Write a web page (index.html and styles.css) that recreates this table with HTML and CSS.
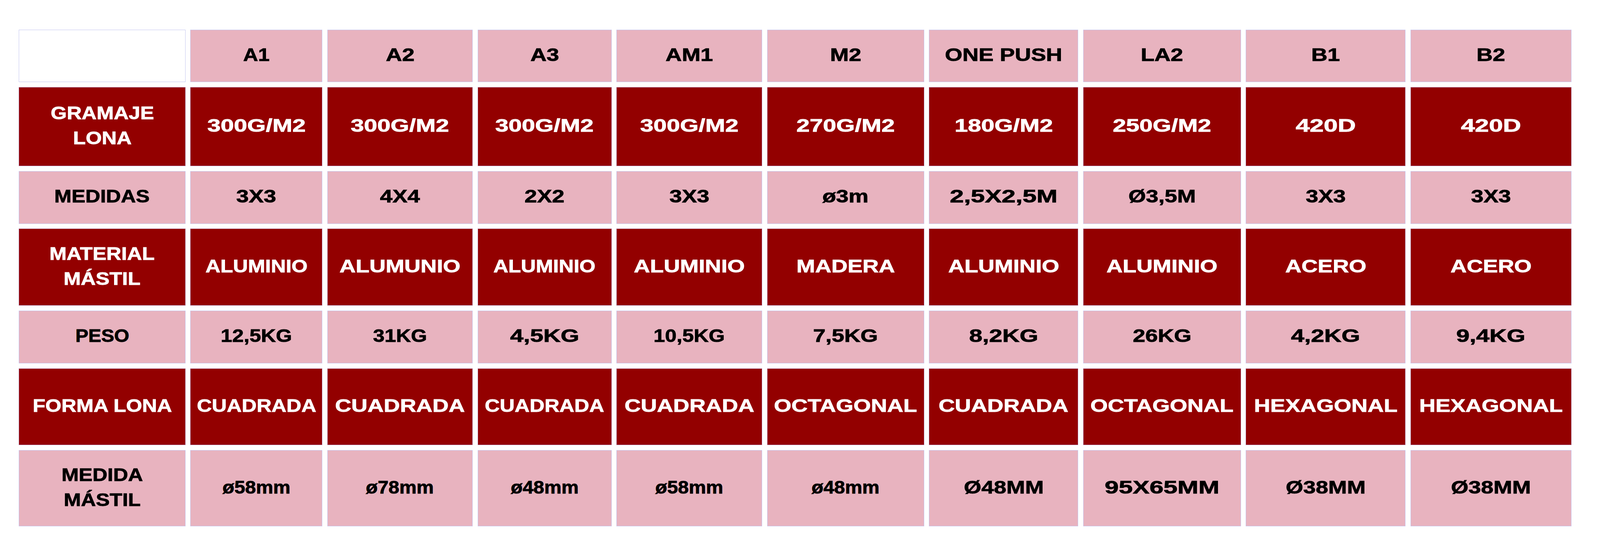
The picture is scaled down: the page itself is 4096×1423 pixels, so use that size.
FILE: index.html
```html
<!DOCTYPE html>
<html lang="es">
<head>
<meta charset="utf-8">
<title>Comparativa de carpas</title>
<link rel="stylesheet" href="styles.css">
</head>
<body>
<div class="specs">
  <div class="cell blank"></div>
  <div class="cell light"><span class="t narrow">A1</span></div>
  <div class="cell light"><span class="t">A2</span></div>
  <div class="cell light"><span class="t">A3</span></div>
  <div class="cell light"><span class="t">AM1</span></div>
  <div class="cell light"><span class="t">M2</span></div>
  <div class="cell light"><span class="t">ONE PUSH</span></div>
  <div class="cell light"><span class="t">LA2</span></div>
  <div class="cell light"><span class="t">B1</span></div>
  <div class="cell light"><span class="t">B2</span></div>

  <div class="cell dark"><span class="t narrow">GRAMAJE<br>LONA</span></div>
  <div class="cell dark"><span class="t wide">300G/M2</span></div>
  <div class="cell dark"><span class="t wide">300G/M2</span></div>
  <div class="cell dark"><span class="t wide">300G/M2</span></div>
  <div class="cell dark"><span class="t wide">300G/M2</span></div>
  <div class="cell dark"><span class="t wide">270G/M2</span></div>
  <div class="cell dark"><span class="t wide">180G/M2</span></div>
  <div class="cell dark"><span class="t wide">250G/M2</span></div>
  <div class="cell dark"><span class="t wider">420D</span></div>
  <div class="cell dark"><span class="t wider">420D</span></div>

  <div class="cell light"><span class="t narrow">MEDIDAS</span></div>
  <div class="cell light"><span class="t">3X3</span></div>
  <div class="cell light"><span class="t">4X4</span></div>
  <div class="cell light"><span class="t">2X2</span></div>
  <div class="cell light"><span class="t">3X3</span></div>
  <div class="cell light"><span class="t">ø3m</span></div>
  <div class="cell light"><span class="t wider">2,5X2,5M</span></div>
  <div class="cell light"><span class="t">Ø3,5M</span></div>
  <div class="cell light"><span class="t">3X3</span></div>
  <div class="cell light"><span class="t">3X3</span></div>

  <div class="cell dark"><span class="t narrow">MATERIAL<br>MÁSTIL</span></div>
  <div class="cell dark"><span class="t narrow">ALUMINIO</span></div>
  <div class="cell dark"><span class="t">ALUMUNIO</span></div>
  <div class="cell dark"><span class="t narrow">ALUMINIO</span></div>
  <div class="cell dark"><span class="t">ALUMINIO</span></div>
  <div class="cell dark"><span class="t">MADERA</span></div>
  <div class="cell dark"><span class="t">ALUMINIO</span></div>
  <div class="cell dark"><span class="t">ALUMINIO</span></div>
  <div class="cell dark"><span class="t">ACERO</span></div>
  <div class="cell dark"><span class="t">ACERO</span></div>

  <div class="cell light"><span class="t condensed">PESO</span></div>
  <div class="cell light"><span class="t narrow">12,5KG</span></div>
  <div class="cell light"><span class="t narrow">31KG</span></div>
  <div class="cell light"><span class="t wide">4,5KG</span></div>
  <div class="cell light"><span class="t narrow">10,5KG</span></div>
  <div class="cell light"><span class="t">7,5KG</span></div>
  <div class="cell light"><span class="t wide">8,2KG</span></div>
  <div class="cell light"><span class="t">26KG</span></div>
  <div class="cell light"><span class="t wide">4,2KG</span></div>
  <div class="cell light"><span class="t wide">9,4KG</span></div>

  <div class="cell dark"><span class="t narrow">FORMA LONA</span></div>
  <div class="cell dark"><span class="t narrow">CUADRADA</span></div>
  <div class="cell dark"><span class="t">CUADRADA</span></div>
  <div class="cell dark"><span class="t narrow">CUADRADA</span></div>
  <div class="cell dark"><span class="t">CUADRADA</span></div>
  <div class="cell dark"><span class="t">OCTAGONAL</span></div>
  <div class="cell dark"><span class="t">CUADRADA</span></div>
  <div class="cell dark"><span class="t">OCTAGONAL</span></div>
  <div class="cell dark"><span class="t">HEXAGONAL</span></div>
  <div class="cell dark"><span class="t">HEXAGONAL</span></div>

  <div class="cell light"><span class="t narrow">MEDIDA<br>MÁSTIL</span></div>
  <div class="cell light"><span class="t condensed">ø58mm</span></div>
  <div class="cell light"><span class="t condensed">ø78mm</span></div>
  <div class="cell light"><span class="t condensed">ø48mm</span></div>
  <div class="cell light"><span class="t condensed">ø58mm</span></div>
  <div class="cell light"><span class="t condensed">ø48mm</span></div>
  <div class="cell light"><span class="t">Ø48MM</span></div>
  <div class="cell light"><span class="t wider">95X65MM</span></div>
  <div class="cell light"><span class="t">Ø38MM</span></div>
  <div class="cell light"><span class="t">Ø38MM</span></div>
</div>
</body>
</html>
```

FILE: styles.css
```css
html, body {
  margin: 0;
  padding: 0;
  background: #ffffff;
}

body {
  width: 4096px;
  height: 1423px;
  overflow: hidden;
  font-family: "Liberation Sans", Arial, sans-serif;
}

.specs {
  display: grid;
  grid-template-columns: 426.5px 338px 372px 343px 373px 402px 382px 403.6px 409px 412px;
  grid-template-rows: 134.3px 202.4px 134.3px 196.8px 135px 196.2px 195.6px;
  column-gap: 12.6px;
  row-gap: 12.8px;
  padding: 76px 0 0 48.3px;
}

.cell {
  box-sizing: border-box;
  border: 1px solid #c4c6f0;
  display: flex;
  align-items: center;
  justify-content: center;
  padding-bottom: 6px;
  text-align: center;
  font-weight: 700;
  font-size: 46px;
  line-height: 64px;
  white-space: nowrap;
}

.blank {
  background: #ffffff;
}

.light {
  background: #e8b3bf;
  color: #000000;
  -webkit-text-stroke: 1px #000000;
}

.dark {
  background: #930000;
  color: #ffffff;
  border-color: #a46a96;
  -webkit-text-stroke: 1px #ffffff;
}

.t {
  display: inline-block;
  transform: scaleX(1.25);
}

.t.condensed {
  transform: scaleX(1.08);
}

.t.narrow {
  transform: scaleX(1.15);
}

.t.wide {
  transform: scaleX(1.33);
}

.t.wider {
  transform: scaleX(1.4);
}
```
